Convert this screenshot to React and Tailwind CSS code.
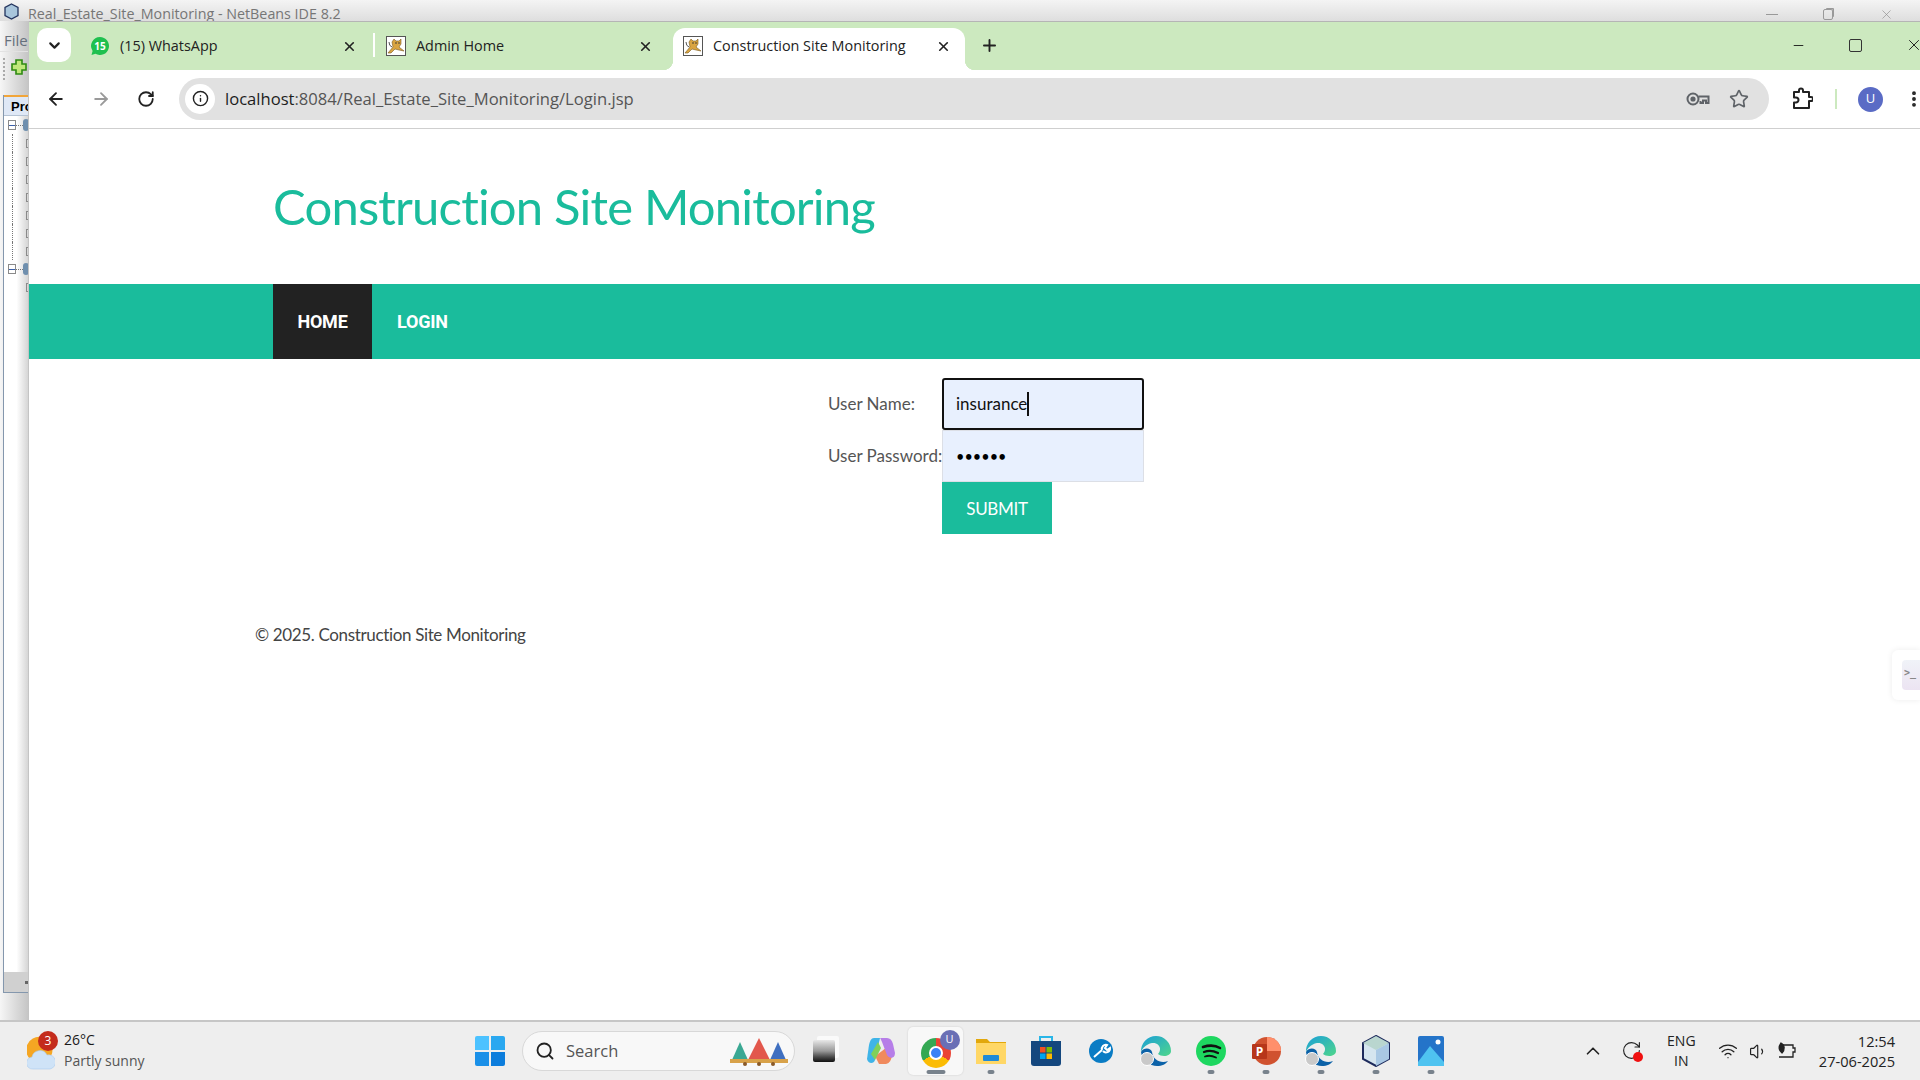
import { ArrowLeft, ArrowRight, RotateCw, Info, Star, X, Plus, ChevronDown, ChevronUp, Search, Minus, Wifi, Volume1, EllipsisVertical } from 'lucide-react';

const uiFont = "font-['Open_Sans',sans-serif]";
const siteFont = "font-['Lato',sans-serif]";

function Tomcat() {
  return (
    <svg width="20" height="20" viewBox="0 0 20 20" className="shrink-0">
      <rect x="0.5" y="0.5" width="19" height="19" fill="#fff" stroke="#555" />
      <path d="M2 17 L7 11 L6 6 L8 3 L10 5 L13 5 L15 3 L15 8 L13 11 L18 15 L13 14 L9 13 L5 17 Z" fill="#d9a441" stroke="#7a5a20" strokeWidth="0.6" />
      <path d="M3 6 Q3 10 6 11" fill="none" stroke="#555" strokeWidth="1" />
      <circle cx="10" cy="7" r="0.8" fill="#333" />
      <circle cx="13" cy="7" r="0.8" fill="#333" />
    </svg>
  );
}

function WhatsAppIcon() {
  return (
    <svg width="20" height="20" viewBox="0 0 20 20" className="shrink-0">
      <path d="M10 1 a9 9 0 1 1 -4.5 16.8 L1.5 19 L2.6 15 A9 9 0 0 1 10 1 Z" fill="#1fc04f" />
      <text x="10" y="13.5" textAnchor="middle" fontSize="10" fontWeight="700" fontFamily="Open Sans" fill="#fff">15</text>
    </svg>
  );
}

function ExtensionIcon() {
  return (
    <svg width="22" height="24" viewBox="0 0 22 24" fill="none" stroke="#222" strokeWidth="2" strokeLinejoin="round">
      <path d="M3 5 H8 V3.5 a2 2 0 0 1 4 0 V5 H18 V10 H20 a2 2 0 0 1 0 4 H18 V21 H3 V15.5 H5 a2.5 2.5 0 0 0 0 -5 H3 Z" />
    </svg>
  );
}

function KeyIcon() {
  return (
    <svg width="24" height="16" viewBox="0 0 24 16" fill="none" stroke="#5f6368" strokeWidth="2">
      <circle cx="7" cy="8" r="5.5" />
      <circle cx="7" cy="8" r="1.6" fill="#5f6368" />
      <path d="M12.5 5.5 H22.5 V12 H20 V9.5 H17 V12 H14.5 V10" />
    </svg>
  );
}

function IdeStrip() {
  return (
    <div className="w-[29px] shrink-0 flex flex-col bg-gradient-to-r from-[#f6f6f6] to-[#c4c4c4] overflow-hidden">
      <div className={`h-[30px] pl-[4px] pt-[8px] text-[15px] text-[#66707c] ${uiFont}`}>File</div>
      <div className="h-[30px] flex items-center gap-[5px] pl-[3px] pt-[4px] border-t border-[#e2e2e2]">
        <div className="w-[3px] h-[22px] border-l-2 border-dotted border-[#aaa]" />
        <svg width="16" height="16" viewBox="0 0 16 16" className="shrink-0 -mt-[4px]">
          <path d="M5 1 H11 V5 H15 V11 H11 V15 H5 V11 H1 V5 H5 Z" fill="#bfe77a" stroke="#2f8a12" strokeWidth="1.6" />
        </svg>
      </div>
      <div className="flex-1 flex flex-col ml-[3px] mt-[14px] border-l border-b border-[#8497ad] mb-[27px]">
        <div className="h-[21px] pl-[7px] bg-[#dfe8f6] border-t-2 border-[#f1a53a] border-b border-b-[#b5c3d4] text-[13px] font-bold text-black leading-[19px] font-['Liberation_Sans',sans-serif] overflow-hidden">
          Pro
        </div>
        <div className="flex-1 flex flex-col bg-gradient-to-r from-white via-white to-[#d2d2d2]">
          {[1, 0, 0, 0, 0, 0, 0, 0, 1, 0].map((root, i) => (
            <div key={i} className="h-[18px] flex items-center shrink-0">
              {root ? (
                <>
                  <div className="ml-[4px] w-[10px] h-[10px] border border-[#8a8a8a] flex items-center justify-center">
                    <div className="w-[6px] h-px bg-[#3b5fa8]" />
                  </div>
                  <div className="w-[8px] border-t border-dotted border-[#777]" />
                  <div className="w-[8px] h-[12px] rounded-full bg-[#6f8fae]" />
                </>
              ) : (
                <>
                  <div className={`ml-[8px] w-px h-[18px] border-l border-dotted ${i < 8 ? 'border-[#777]' : 'border-transparent'}`} />
                  <div className="ml-[13px] w-[4px] h-[9px] border border-[#8a8a8a] border-r-0" />
                </>
              )}
            </div>
          ))}
          <div className="flex-1" />
          <div className="h-[20px] bg-[#d0d0d0] flex items-center justify-end">
            <div className="w-[4px] h-[3px] bg-[#666]" />
          </div>
        </div>
      </div>
    </div>
  );
}

function Tab({ icon, title, active, sep }) {
  if (active) {
    return (
      <div className="relative w-[292px] h-[42px] mt-[6px] flex items-center pl-[10px] pr-[14px] pb-[6px] bg-white rounded-t-[12px] shrink-0">
        <div className="absolute -left-[10px] bottom-0 w-[10px] h-[10px] bg-[radial-gradient(circle_at_0_0,#cce9bf_10px,#fff_10.5px)]" />
        <div className="absolute -right-[10px] bottom-0 w-[10px] h-[10px] bg-[radial-gradient(circle_at_100%_0,#cce9bf_10px,#fff_10.5px)]" />
        {icon}
        <span className="ml-[10px] text-[14.4px] text-[#222] flex-1">{title}</span>
        <X size={15} strokeWidth={2.6} color="#222" />
      </div>
    );
  }
  return (
    <div className="w-[296px] h-[42px] mt-[6px] flex items-center pl-[9px] pr-[20px] pb-[6px] shrink-0 relative">
      {icon}
      <span className="ml-[10px] text-[14.4px] text-[#222] flex-1">{title}</span>
      <X size={15} strokeWidth={2.6} color="#222" />
      {sep && <div className="absolute right-[2px] top-[5px] h-[24px] w-[2px] bg-white" />}
    </div>
  );
}

function TabStrip() {
  return (
    <div className={`h-[49px] bg-[#cce9bf] border-t border-[#b5b5b5] flex items-start ${uiFont}`}>
      <div className="ml-[8px] mt-[6px] w-[34px] h-[34px] rounded-[10px] bg-white flex items-center justify-center shrink-0">
        <ChevronDown size={17} strokeWidth={3} color="#222" />
      </div>
      <div className="w-[10px] shrink-0" />
      <Tab icon={<WhatsAppIcon />} title="(15) WhatsApp" sep />
      <Tab icon={<Tomcat />} title="Admin Home" />
      <Tab icon={<Tomcat />} title="Construction Site Monitoring" active />
      <div className="ml-[15px] mt-[14px] shrink-0">
        <Plus size={19} strokeWidth={2.4} color="#222" />
      </div>
      <div className="ml-auto flex items-center mt-[14px] -mr-[3px]">
        <Minus size={15} strokeWidth={1.4} color="#111" />
        <div className="ml-[43px] w-[13px] h-[13px] rounded-[2px] border-[1.5px] border-[#333]" />
        <X size={18} strokeWidth={1.2} color="#111" className="ml-[43px]" />
      </div>
    </div>
  );
}

function Toolbar() {
  return (
    <div className="h-[59px] bg-white border-b border-[#cfcfcf] flex items-center shrink-0">
      <ArrowLeft size={20} strokeWidth={2.2} color="#222" className="ml-[17px] shrink-0" />
      <ArrowRight size={20} strokeWidth={2.2} color="#9a9a9a" className="ml-[25px] shrink-0" />
      <RotateCw size={18} strokeWidth={2.4} color="#222" className="ml-[26px] shrink-0" />
      <div className="ml-[24px] w-[1590px] h-[42px] rounded-full bg-[#e1e1e1] flex items-center pl-[6px] pr-[20px] shrink-0 mb-[1px]">
        <div className="w-[30px] h-[30px] rounded-full bg-white flex items-center justify-center">
          <Info size={17} strokeWidth={2} color="#222" />
        </div>
        <div className={`ml-[10px] pt-[1px] text-[16.6px] text-[#555] ${uiFont} flex-1`}>
          <span className="text-[#1d1d1d]">localhost</span>:8084/Real_Estate_Site_Monitoring/Login.jsp
        </div>
        <KeyIcon />
        <Star size={20} strokeWidth={2} color="#5f6368" className="ml-[19px]" />
      </div>
      <div className="ml-[22px] shrink-0"><ExtensionIcon /></div>
      <div className="ml-[22px] w-[2px] h-[20px] bg-[#cce9bf] shrink-0" />
      <div className={`ml-[21px] w-[25px] h-[25px] rounded-full bg-[#5a6bc5] text-white text-[13px] flex items-center justify-center shrink-0 ${uiFont}`}>U</div>
      <EllipsisVertical size={20} strokeWidth={2.6} color="#222" className="ml-[21px] shrink-0" />
    </div>
  );
}

function LoginPage() {
  return (
    <div className={`relative flex-1 bg-white overflow-hidden ${siteFont}`}>
      <div className="h-[155px] pl-[244px] flex items-center">
        <h1 className="text-[49px] font-normal text-[#1abc9c] tracking-[-0.82px] leading-none pb-[1px]">Construction Site Monitoring</h1>
      </div>
      <nav className="h-[75px] bg-[#1abc9c] pl-[244px] flex font-['Roboto',sans-serif] font-bold text-white text-[18px]">
        <a className="w-[99px] bg-[#222222] flex items-center justify-center tracking-[-0.2px]">HOME</a>
        <a className="ml-[25px] flex items-center tracking-[-0.2px]">LOGIN</a>
      </nav>
      <form className="ml-[799px] mt-[19px] grid grid-cols-[114px_202px] text-[17px] text-[#555]">
        <label className="h-[52px] flex items-center">User Name:</label>
        <div className="h-[52px] bg-[#e8f0fe] border-2 border-[#111] rounded-[3px] flex items-center pl-[12px] text-[#111]">
          insurance
          <span className="w-[2px] h-[24px] bg-[#111]" />
        </div>
        <label className="h-[52px] flex items-center whitespace-nowrap">User Password:</label>
        <input
          type="password"
          defaultValue="insura"
          readOnly
          className="h-[52px] w-[202px] bg-[#e8f0fe] border border-[#dcdfe6] pl-[13px] text-[14.5px] text-black outline-none"
        />
        <div />
        <button type="button" className="h-[52px] w-[110px] pt-[1px] bg-[#1abc9c] text-white text-[17px] tracking-[-0.3px]">SUBMIT</button>
      </form>
      <p className="ml-[226px] mt-[88px] text-[17px] tracking-[-0.35px] text-[#444]">© 2025. Construction Site Monitoring</p>
      <div className="absolute right-0 top-[521px] w-[28px] h-[50px] bg-white rounded-l-[6px] shadow-[0_0_6px_rgba(0,0,0,0.08)] flex items-center justify-end">
        <div className="w-[18px] h-[30px] rounded-l-[4px] bg-gradient-to-b from-[#f0f3f8] to-[#ece4f2] text-[10px] font-bold text-[#888] font-['DejaVu_Sans_Mono',monospace] leading-[26px] pl-[2px]">&gt;_</div>
      </div>
    </div>
  );
}

function WeatherIcon() {
  return (
    <div className="relative w-[30px] h-[38px] shrink-0">
      <svg width="28" height="34" viewBox="0 0 28 34" className="absolute left-0 top-[4px]">
        <path d="M14 1 A13 13 0 0 0 4 24 L24 20 A13 13 0 0 0 14 1 Z" fill="#f5a623" />
        <path d="M6 33 a6 6 0 0 1 -1 -12 a8 8 0 0 1 15 -2 a7 7 0 0 1 3 14 Z" fill="#cfe3f7" stroke="#a9cbee" strokeWidth="0.6" />
      </svg>
      <div className="absolute left-[11px] -top-[1px] w-[20px] h-[20px] rounded-full bg-[#c42b1c] text-white text-[12px] flex items-center justify-center">3</div>
    </div>
  );
}

function TaskIcon({ children, dot, active }) {
  return (
    <div className={`relative w-[55px] h-[48px] flex items-center justify-center shrink-0 rounded-[5px] ${active ? 'bg-[#f8f8f8] shadow-[0_0_2px_rgba(0,0,0,0.15)]' : ''}`}>
      {children}
      {dot && <div className={`absolute bottom-[1px] left-1/2 -translate-x-1/2 h-[4px] rounded-full bg-[#78828c] ${active ? 'w-[19px]' : 'w-[7px]'}`} />}
    </div>
  );
}

function EdgeIcon() {
  return (
    <div className="relative">
      <svg width="30" height="30" viewBox="0 0 30 30">
        <defs>
          <linearGradient id="edgeg" x1="0" y1="0" x2="1" y2="1">
            <stop offset="0" stopColor="#1a9fd8" />
            <stop offset="1" stopColor="#4fd68b" />
          </linearGradient>
        </defs>
        <path d="M15 0 A15 15 0 0 1 30 15 C30 21 20 21 17 18 C22 12 17 6 11 7 C5 8 1 13 0 16 A15 15 0 0 1 15 0 Z" fill="url(#edgeg)" />
        <path d="M0 16 C1 25 9 30 16 30 C21 30 25 28 27 25 C20 28 12 24 11 16 C10 12 3 11 0 16 Z" fill="#0c62a8" />
      </svg>
      <div className="absolute -left-[1px] bottom-0 w-[14px] h-[14px] rounded-full bg-[#c9c9c9] border border-white" />
    </div>
  );
}

function Taskbar() {
  return (
    <div className={`h-[60px] shrink-0 bg-[#eeeeee] border-t-2 border-[#c6c6c6] flex items-center ${uiFont}`}>
      <div className="ml-[27px] flex items-center w-[448px] shrink-0">
        <WeatherIcon />
        <div className="ml-[7px] leading-[21px] -mt-[3px]">
          <div className="text-[14px] text-[#1a1a1a]">26°C</div>
          <div className="text-[14px] text-[#555]">Partly sunny</div>
        </div>
      </div>
      <div className="w-[30px] h-[30px] grid grid-cols-2 gap-[2px] shrink-0">
        <div className="bg-[#4cc2ff] rounded-tl-[2px]" />
        <div className="bg-[#2aa8f0] rounded-tr-[2px]" />
        <div className="bg-[#1a90e8] rounded-bl-[2px]" />
        <div className="bg-[#0c7ddc] rounded-br-[2px]" />
      </div>
      <div className="ml-[17px] w-[273px] h-[40px] rounded-full bg-[#f8f8f8] border border-[#d8d8d8] flex items-center pl-[12px] pr-[5px] shrink-0">
        <Search size={20} strokeWidth={2.2} color="#222" />
        <span className="ml-[11px] text-[16.5px] text-[#555] flex-1">Search</span>
        <svg width="60" height="30" viewBox="0 0 60 30">
          <path d="M3 24 L11 6 L19 24 Z" fill="#3aa893" />
          <path d="M19 24 L30 2 L41 24 Z" fill="#e2574c" />
          <path d="M41 24 L49 6 L57 24 Z" fill="#3f6fc0" />
          <rect x="1" y="23" width="58" height="4" fill="#d8a24a" />
          <circle cx="16" cy="28" r="2" fill="#8a5a2a" />
          <circle cx="30" cy="28" r="2" fill="#8a5a2a" />
          <circle cx="44" cy="28" r="2" fill="#8a5a2a" />
        </svg>
      </div>
      <div className="ml-[1px] flex items-center shrink-0">
        <div className="mr-[2px]">
          <TaskIcon>
            <div className="w-[22px] h-[22px] bg-gradient-to-b from-[#e8e8e8] via-[#999] to-[#111] rounded-[2px] shadow-[4px_-4px_0_#fafafa]" />
          </TaskIcon>
        </div>
        <TaskIcon>
          <svg width="30" height="30" viewBox="0 0 30 30">
            <path d="M8 2 H14 L9 24 C8 28 2 28 1 23 L3 9 C4 5 5 2 8 2 Z" fill="#3fb4e8" />
            <path d="M9 20 L13 28 H20 C24 27 25 24 26 20 L21 11 L16 15 Z" fill="#f08a5d" />
            <path d="M14 2 H21 C24 2 26 4 27 8 L29 17 C29 23 23 23 21 19 L16 6 C15 4 15 3 14 2 Z" fill="#b67ee8" />
            <path d="M5 18 L12 6 L15 12 L9 24 Z" fill="#7fd05a" />
          </svg>
        </TaskIcon>
        <TaskIcon dot active>
          <div className="relative">
            <div className="w-[30px] h-[30px] rounded-full bg-[conic-gradient(#ea4335_0deg_120deg,#fbbc05_120deg_240deg,#34a853_240deg_360deg)] flex items-center justify-center mt-[3px]">
              <div className="w-[14px] h-[14px] rounded-full bg-[#3b82f6] border-2 border-white" />
            </div>
            <div className="absolute -top-[5px] -right-[9px] w-[20px] h-[20px] rounded-full bg-[#6a6fb5] text-white text-[11px] flex items-center justify-center">U</div>
          </div>
        </TaskIcon>
        <TaskIcon dot>
          <svg width="30" height="30" viewBox="0 0 30 30">
            <path d="M0 3 H11 L14 6 H30 V28 H0 Z" fill="#e2a80c" />
            <rect y="7" width="30" height="21" fill="#ffd766" />
            <rect x="7" y="19" width="16" height="6" rx="1" fill="#1f8ad8" />
          </svg>
        </TaskIcon>
        <TaskIcon>
          <svg width="30" height="32" viewBox="0 0 30 32">
            <path d="M9 7 V2 H21 V7" fill="none" stroke="#29b6e8" strokeWidth="2" />
            <path d="M0 6 H30 V28 a3 3 0 0 1 -3 3 H3 a3 3 0 0 1 -3 -3 Z" fill="#14477e" />
            <rect x="9" y="12" width="5.5" height="5.5" fill="#f25022" />
            <rect x="15.5" y="12" width="5.5" height="5.5" fill="#7fba00" />
            <rect x="9" y="18.5" width="5.5" height="5.5" fill="#00a4ef" />
            <rect x="15.5" y="18.5" width="5.5" height="5.5" fill="#ffb900" />
          </svg>
        </TaskIcon>
        <TaskIcon>
          <svg width="24" height="24" viewBox="0 0 24 24">
            <circle cx="12" cy="12" r="12" fill="#0a7cc4" />
            <path d="M5 18 L13 11 M13 11 a4 4 0 0 1 5 -5 l-2 3 l2 2 l3 -2 a4 4 0 0 1 -7 3" stroke="#fff" strokeWidth="2" fill="none" />
          </svg>
        </TaskIcon>
        <TaskIcon><EdgeIcon /></TaskIcon>
        <TaskIcon dot>
          <svg width="30" height="30" viewBox="0 0 30 30" fill="none" stroke="#111" strokeLinecap="round">
            <circle cx="15" cy="15" r="15" fill="#1ed760" stroke="none" />
            <path d="M7 11 C13 9 19 9 24 12" strokeWidth="2.6" />
            <path d="M8 16 C13 14 18 15 22 17" strokeWidth="2.2" />
            <path d="M9 20.5 C13 19 17 20 20 21.5" strokeWidth="1.8" />
          </svg>
        </TaskIcon>
        <TaskIcon dot>
          <svg width="30" height="30" viewBox="0 0 30 30">
            <circle cx="16" cy="15" r="14" fill="#d0522f" />
            <path d="M16 1 A14 14 0 0 1 30 15 H16 Z" fill="#ff8f6b" />
            <rect x="1" y="8" width="15" height="15" rx="1" fill="#b7361a" />
            <text x="8.5" y="20" textAnchor="middle" fontSize="12" fontWeight="700" fontFamily="Open Sans" fill="#fff">P</text>
          </svg>
        </TaskIcon>
        <TaskIcon dot><EdgeIcon /></TaskIcon>
        <TaskIcon dot>
          <svg width="28" height="32" viewBox="0 0 28 32">
            <path d="M14 1 L27 8 V24 L14 31 L1 24 V8 Z" fill="#d5e5ef" stroke="#1d2a5c" strokeWidth="2" />
            <path d="M14 15 L27 8 L14 1 L1 8 Z" fill="#b9d6cf" />
            <path d="M14 15 V31 L27 24 V8 Z" fill="#a9c8e4" />
          </svg>
        </TaskIcon>
        <TaskIcon dot>
          <svg width="26" height="30" viewBox="0 0 26 30">
            <rect width="26" height="30" rx="2" fill="#2474c9" />
            <circle cx="20" cy="6" r="2.5" fill="#fff" />
            <path d="M0 26 L12 10 L26 26 V30 H0 Z" fill="#4fc3f0" />
          </svg>
        </TaskIcon>
      </div>
      <div className="flex-1" />
      <ChevronUp size={22} strokeWidth={1.8} color="#222" className="shrink-0" />
      <div className="relative ml-[17px] w-[22px] h-[22px] shrink-0">
        <RotateCw size={21} strokeWidth={1.3} color="#222" />
        <div className="absolute right-0 bottom-0 w-[10px] h-[10px] rounded-full bg-[#f01010]" />
      </div>
      <div className="ml-[19px] w-[38px] text-center text-[14px] leading-[20px] text-[#222] shrink-0">ENG<br />IN</div>
      <Wifi size={20} strokeWidth={1.6} color="#222" className="ml-[18px] shrink-0" />
      <Volume1 size={19} strokeWidth={1.5} color="#222" className="ml-[10.5px] shrink-0" />
      <svg width="21" height="18" viewBox="0 0 21 18" fill="none" stroke="#222" strokeWidth="1.3" className="ml-[9.5px] shrink-0">
        <path d="M5 3 H16 V6 H18 V10 H16 V15 H2" />
        <path d="M4 1 C8 3 8 8 5 11 C2 9 1 5 4 1 Z" fill="#222" />
      </svg>
      <div className="ml-[20.5px] mr-[25px] text-right text-[14.6px] leading-[20px] text-[#222] shrink-0">
        12:54<br />27-06-2025
      </div>
    </div>
  );
}

export default function App() {
  return (
    <div className="w-[1920px] h-[1080px] flex flex-col overflow-hidden bg-white">
      <div className={`h-[21px] shrink-0 bg-gradient-to-b from-[#f4f4f4] to-[#dedede] flex items-center pl-[4px] pt-[7px] overflow-hidden ${uiFont}`}>
        <svg width="15" height="17" viewBox="0 0 15 17" className="shrink-0 -mt-[5px]">
          <path d="M7.5 1 L14 4.5 V12.5 L7.5 16 L1 12.5 V4.5 Z" fill="#a9c6dc" stroke="#23345e" strokeWidth="1.3" />
        </svg>
        <span className="ml-[9px] text-[14.3px] text-[#767676]">Real_Estate_Site_Monitoring - NetBeans IDE 8.2</span>
        <div className="ml-auto flex items-center">
          <div className="w-[12px] h-px bg-[#999]" />
          <div className="ml-[45px] w-[10px] h-[11px] border border-[#999] rounded-[2px] shadow-[2px_-2px_0_-1px_#999]" />
          <X size={15} strokeWidth={1} color="#888" className="ml-[46px] mr-[26px]" />
        </div>
      </div>
      <div className="flex-1 flex min-h-0">
        <IdeStrip />
        <div className="flex-1 flex flex-col min-w-0 overflow-hidden border-l border-[#c4c4c4] -ml-px">
          <TabStrip />
          <Toolbar />
          <LoginPage />
        </div>
      </div>
      <Taskbar />
    </div>
  );
}
